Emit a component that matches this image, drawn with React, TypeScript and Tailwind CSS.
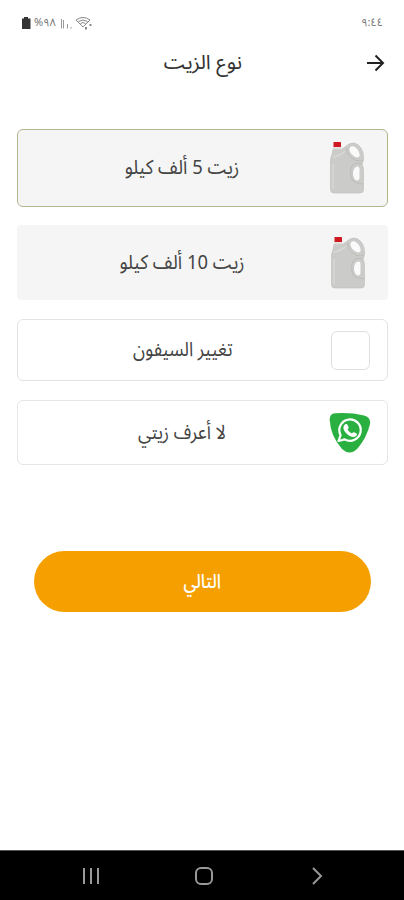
import type { ReactNode } from "react";

const OilJug = () => (
  <svg viewBox="0 0 36 56" className="mr-[5px] h-14 w-9 shrink-0">
    <path
      fillRule="evenodd"
      fill="#cbcbc9"
      stroke="#c0c0bd"
      strokeWidth="0.7"
      d="M3 9.500H11.500L15.500 6.500Q19 3 23.500 3Q28 3.500 31 8Q34 13 33.500 18Q33.500 22 32 24Q33.500 27 33.500 31V49.500Q33.500 53 30 53H4Q0.500 53 0.500 49.500V22Q0.500 17 2 15ZM21 6.500C18.500 8 19 11.500 22 14.500C25 17.500 28.500 18.500 29.500 16C30.500 12 25 5 21 6.500ZM27 26.500C24 27.500 23 30.500 23 33.500C23 37 24.500 40 27 40.500C29 40.500 29.500 39 29.500 37V29.500Q29.500 26 27 26.500Z"
    />
    <path
      fill="none"
      stroke="#bdbdba"
      strokeWidth="1"
      d="M17 8C16 13 20 18 26 20.500Q30 21.500 33 20M32 24Q25 22 22 26Q19.500 30 21 37Q22 42 27 43L33 44"
    />
    <path fill="none" stroke="#d8d8d5" strokeWidth="1.500" d="M3 17Q10 16 15 11M3 24V49" />
    <rect x="3.500" y="2" width="7.500" height="5" rx="0.600" fill="#cf1820" />
    <path stroke="#dddcd7" strokeWidth="2" d="M3 8.300H11.500" />
    <g fill="#fafafa">
      <path d="M21 6.500C18.500 8 19 11.500 22 14.500C25 17.500 28.500 18.500 29.500 16C30.500 12 25 5 21 6.500Z" />
      <path d="M27 26.500C24 27.500 23 30.500 23 33.500C23 37 24.500 40 27 40.500C29 40.500 29.500 39 29.500 37V29.500Q29.500 26 27 26.500Z" />
    </g>
  </svg>
);

const WhatsAppBadge = () => (
  <svg viewBox="0 0 42 42" className="h-[42px] w-[42px] shrink-0">
    <path
      fill="#2ab040"
      d="M6 1.300Q22 0.300 35 3.500Q42 5.500 41 12Q38 25 29 36Q21 44.500 13 37Q1.500 24 0.700 8Q0.500 1.800 6 1.300Z"
    />
    <path
      fill="none"
      stroke="#fff"
      strokeWidth="2.200"
      strokeLinejoin="round"
      d="M9.500 29L11.600 23.200A10.700 10.700 0 1 1 15.700 27.400Z"
    />
    <path
      fill="#fff"
      d="M16.500 12Q18 11.500 18.600 13L19.700 15.600Q19.700 16.500 18.500 17.600Q20.200 20.500 23 21.600Q24 20 25 20.300L27.700 21.500Q28.500 22.500 27.200 24Q24.700 26 20.700 23.900Q16 21.300 14.500 17Q14 13.500 16.500 12Z"
    />
  </svg>
);

type OptionProps = {
  label: string;
  className: string;
  textClassName: string;
  children: ReactNode;
};

const Option = ({ label, className, textClassName, children }: OptionProps) => (
  <button className={`flex w-full items-center pr-[17px] pl-4 ${className}`}>
    <div className="flex w-10 shrink-0 justify-center">{children}</div>
    <span className={`flex-1 text-center text-xl whitespace-nowrap text-[#444] ${textClassName}`}>
      {label}
    </span>
  </button>
);

export default function App() {
  return (
    <div
      dir="rtl"
      className="flex h-[900px] w-[404px] flex-col overflow-hidden bg-white font-['Noto_Sans_Arabic','Open_Sans','DejaVu_Sans',sans-serif]"
    >
      {/* Status bar */}
      <div className="flex h-[46px] items-center justify-between px-[21px] text-[11px] text-[#777]">
        <span>٩:٤٤</span>
        <div className="flex items-center gap-[3px]" dir="ltr">
          <svg viewBox="0 0 10 12" className="h-3 w-2.5" fill="#333">
            <path d="M3 0H7V1.500H9.500V12H1V1.500H3Z" />
          </svg>
          <span>%٩٨</span>
          <svg viewBox="0 0 12 11" className="ml-px h-[11px] w-3" stroke="#999">
            <path d="M1.500 1V10.500M3.500 2V10.500M7.500 6V10.500M11 9V10.500" />
          </svg>
          <svg viewBox="0 0 18 14" className="h-3.5 w-[18px]" fill="none" stroke="#888">
            <path d="M1 4Q8-1 15 4L8 11ZM3.500 5.500Q8 2.500 12.500 5.500M5.500 7.500Q8 5.500 10.500 7.500" />
            <path strokeWidth="2" d="M11 11V13.500M15.500 8V10" />
          </svg>
        </div>
      </div>

      {/* Header */}
      <header className="flex h-[34px] items-center pr-[19px] pl-4">
        <svg viewBox="0 0 20 20" className="h-5 w-5" fill="none" stroke="#222" strokeWidth="2">
          <path d="M2 10H18M10.500 2.500L18 10L10.500 17.500" />
        </svg>
        <h1 className="flex-1 scale-x-104 text-center text-xl text-[#333]">نوع الزيت</h1>
        <div className="w-[25px]" />
      </header>

      <main className="flex flex-col pt-[49px] pr-4 pl-[17px]">
        <Option
          label="زيت 5 ألف كيلو"
          className="h-[78px] rounded-md border border-[#b4b58b] bg-[#f5f5f5]"
          textClassName="scale-x-92"
        >
          <OilJug />
        </Option>
        <Option
          label="زيت 10 ألف كيلو"
          className="mt-[18px] h-[75px] rounded-sm bg-[#f5f5f5]"
          textClassName="scale-x-92"
        >
          <OilJug />
        </Option>
        <Option
          label="تغيير السيفون"
          className="mt-[19px] h-[62px] rounded-md border border-[#e3e3e3]"
          textClassName="scale-x-89 pl-0.5"
        >
          <div className="h-[39px] w-[39px] shrink-0 rounded-md border border-[#dfdfdf]" />
        </Option>
        <Option
          label="لا أعرف زيتي"
          className="mt-[19px] h-[65px] rounded-md border border-[#e6e6e6]"
          textClassName="scale-x-89"
        >
          <WhatsAppBadge />
        </Option>
        <button className="mx-[17px] mt-[86px] h-[61px] rounded-full bg-[#f5a000] text-xl font-medium text-white">
          <span className="inline-block scale-x-84">التالي</span>
        </button>
      </main>

      {/* Navigation bar */}
      <nav className="mt-auto h-[50px] border-t border-[#555] bg-black" dir="ltr">
        <div className="flex h-full items-center justify-between pr-[78px] pl-[81px]">
          <svg viewBox="0 0 20 20" className="h-5 w-5" stroke="#999" strokeWidth="2">
            <path d="M3 2V18M10 2V18M17 2V18" />
          </svg>
          <div className="mr-px h-[18px] w-[18px] rounded-md border-2 border-[#999]" />
          <svg viewBox="0 0 18 20" className="h-5 w-[18px]" fill="none" stroke="#999" strokeWidth="2">
            <path d="M5 2L13 10L5 18" />
          </svg>
        </div>
      </nav>
    </div>
  );
}
